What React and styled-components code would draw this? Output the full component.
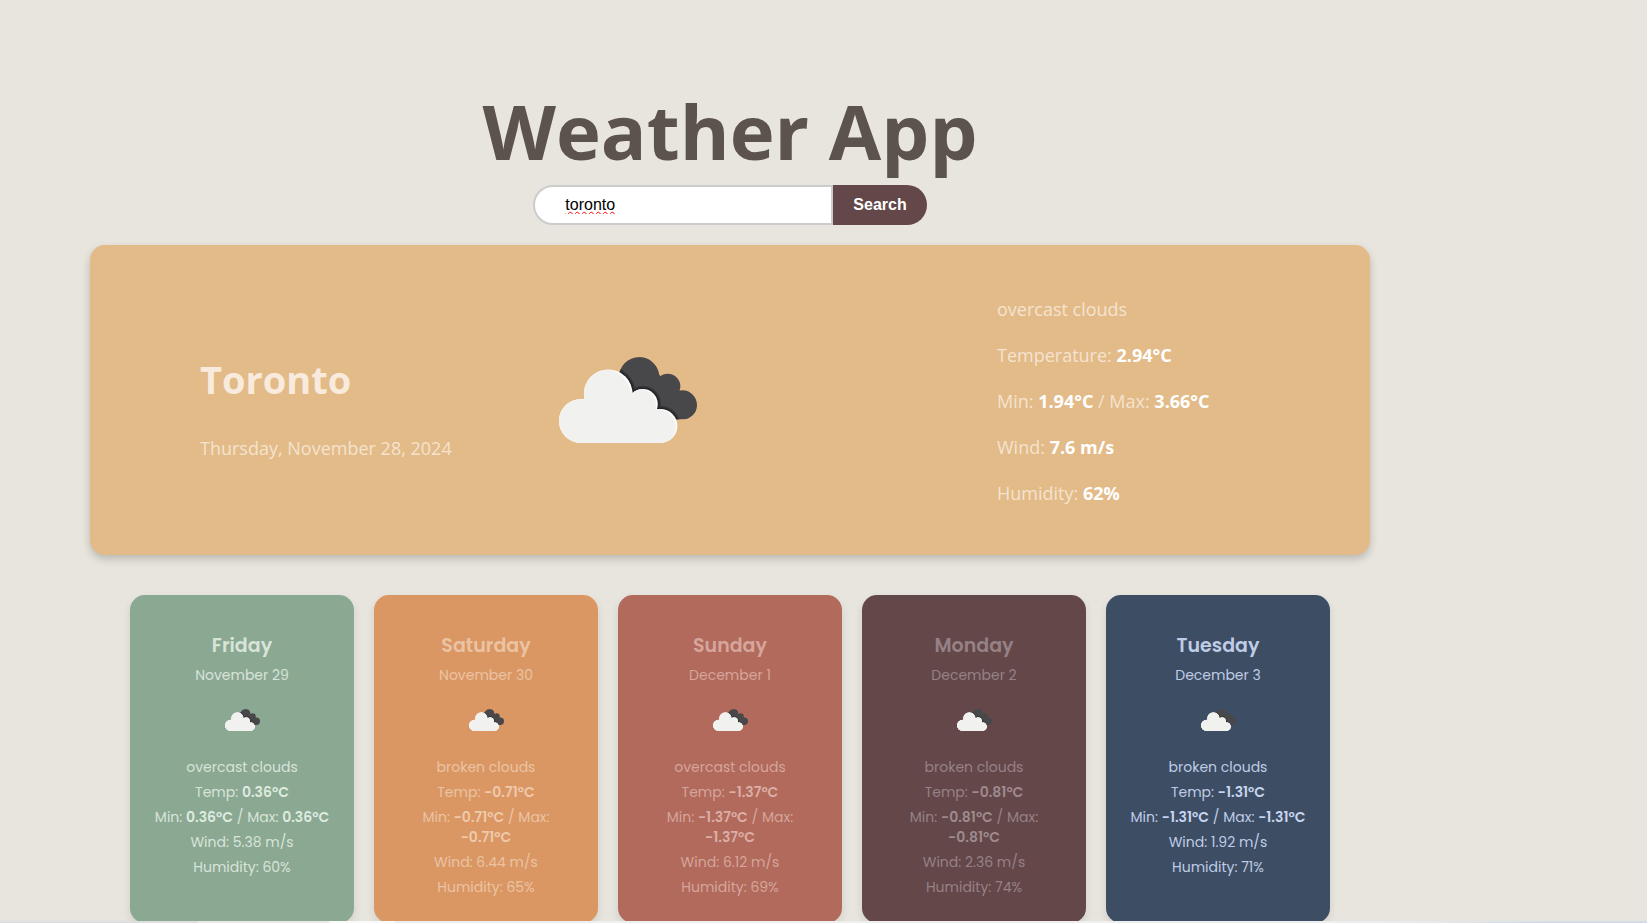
import React, { useId } from "react";
import styled, { createGlobalStyle } from "styled-components";

const GlobalStyle = createGlobalStyle`
  *, *::before, *::after { box-sizing: border-box; }
  html { background: #e8e5de; }
  body {
    margin: 0;
    overflow: hidden;
    background: #e8e5de;
    font-family: "Segoe UI", "Open Sans", "Noto Sans", sans-serif;
  }
`;

const Page = styled.main`
  min-height: 100vh;
  padding: 81px 90px 0;
`;

const Container = styled.div`
  display: flex;
  flex-direction: column;
  max-width: 1280px;
`;

const Title = styled.h1`
  margin: 0 0 4px;
  color: #5c534d;
  font-size: 76px;
  font-weight: 700;
  line-height: 100px;
  text-align: center;
`;

const SearchForm = styled.form`
  display: flex;
  justify-content: center;
  margin-bottom: 20px;
  font-family: "Liberation Sans", Arial, sans-serif;
`;

const SearchInput = styled.input`
  width: 300px;
  height: 40px;
  padding: 0 30px;
  border: 2px solid #ccc;
  border-radius: 20px 0 0 20px;
  outline: none;
  background: #fff;
  color: #000;
  font: 16px "Liberation Sans", Arial, sans-serif;
  text-decoration: underline wavy #f00 1px;
`;

const SearchButton = styled.button`
  height: 40px;
  padding: 0 20px;
  border: 0;
  border-radius: 0 20px 20px 0;
  background: #644749;
  color: #fff;
  font: bold 16px "Liberation Sans", Arial, sans-serif;
`;

const Current = styled.section`
  display: grid;
  grid-template-columns: 359fr 438fr 373fr;
  align-items: center;
  min-height: 310px;
  padding-left: 110px;
  border-radius: 15px;
  background: #e2bb89;
  box-shadow: 0 4px 8px rgba(0, 0, 0, 0.2);
  color: #f5e3cf;
  font-size: 18px;
  line-height: 26px;
`;

const Place = styled.div`
  padding-top: 16px;
`;

const City = styled.h2`
  margin: 0 0 32px;
  color: #f8ebdd;
  font-size: 38px;
  font-weight: 700;
  line-height: 48px;
`;

const Line = styled.p`
  margin: 0;
`;

const Details = styled.div`
  display: flex;
  flex-direction: column;
  gap: 20px;
  padding-top: 2px;

  strong { color: #fff; }
`;

const Forecast = styled.section`
  display: grid;
  grid-template-columns: repeat(5, 1fr);
  gap: 20px;
  padding: 40px 40px 0;
`;

const DayCard = styled.article`
  display: flex;
  flex-direction: column;
  align-items: center;
  gap: 5px;
  min-height: 328px;
  padding: 37px 20px 20px;
  border-radius: 15px;
  background: ${(p) => p.$bg};
  box-shadow: 0 4px 8px rgba(0, 0, 0, 0.1);
  color: ${(p) => p.$fg};
  font-family: Poppins, Inter, sans-serif;
  font-size: 14px;
  line-height: 20px;
  text-align: center;

  strong { color: ${(p) => p.$strong}; font-weight: 600; }
`;

const DayName = styled.h3`
  margin: 0;
  font-size: 19px;
  font-weight: 600;
  line-height: 28px;
`;

const IconSlot = styled.div`
  display: flex;
  align-items: center;
  height: 62px;
  padding-bottom: 2px;
`;

const CloudSvg = styled.svg`
  display: block;
  width: ${(p) => p.$width}px;
  height: ${(p) => p.$height}px;
`;

const BottomStrip = styled.div`
  position: fixed;
  inset: auto 0 0;
  height: 2px;
  background: linear-gradient(
    to right,
    #dedee1 0 12%,
    #eaeaeb 12% 20%,
    #fafafa 20% 24%,
    #efefef 24% 80%,
    #e6ebed 86%,
    #d5dce6 94%
  );
`;

function CloudShape(props) {
  return (
    <g {...props}>
      <circle cx="205" cy="157" r="73" />
      <circle cx="123" cy="239" r="66" />
      <circle cx="309" cy="188" r="45" />
      <circle cx="362" cy="254" r="51" />
      <path d="M123 180H310L362 210V305H123Z" />
    </g>
  );
}

function CloudIcon({ width, height, label }) {
  const id = useId();
  return (
    <CloudSvg $width={width} $height={height} viewBox="57 47 415 258" role="img" aria-label={label}>
      <clipPath id={id + "back"}>
        <circle cx="298" cy="108" r="61" />
        <circle cx="384" cy="135" r="38" />
        <circle cx="428" cy="191" r="44" />
        <path d="M245 110L350 90L400 150L428 235H370Z" />
      </clipPath>
      <clipPath id={id + "front"}>
        <circle cx="205" cy="157" r="73" />
        <circle cx="123" cy="239" r="66" />
        <circle cx="309" cy="188" r="45" />
        <circle cx="362" cy="254" r="51" />
        <path d="M123 180H310L362 210V305H123Z" />
      </clipPath>
      <g clipPath={`url(#${id}back)`}>
        <rect x="57" y="47" width="415" height="258" fill="#48484a" />
        <CloudShape fill="none" stroke="#39393b" strokeWidth="20" />
        <CloudShape fill="none" stroke="#262628" strokeWidth="11" />
      </g>
      <CloudShape fill="#fff" />
      <g clipPath={`url(#${id}front)`}>
        <CloudShape fill="#f1f1ef" transform="translate(-5 3)" />
        <CloudShape fill="#f1f1ef" transform="translate(-10 0)" />
      </g>
    </CloudSvg>
  );
}

const days = [
  { name: "Friday", date: "November 29", sky: "overcast clouds", temp: "0.36", wind: "5.38", humidity: 60, bg: "#8ba892", fg: "#d8e4da", strong: "#deebe0" },
  { name: "Saturday", date: "November 30", sky: "broken clouds", temp: "-0.71", wind: "6.44", humidity: 65, bg: "#da9763", fg: "#ebc3a3", strong: "#efc9ab", wraps: true },
  { name: "Sunday", date: "December 1", sky: "overcast clouds", temp: "-1.37", wind: "6.12", humidity: 69, bg: "#b16a5b", fg: "#d6a59c", strong: "#dcaea6", wraps: true },
  { name: "Monday", date: "December 2", sky: "broken clouds", temp: "-0.81", wind: "2.36", humidity: 74, bg: "#644749", fg: "#968285", strong: "#9e8b8e", wraps: true },
  { name: "Tuesday", date: "December 3", sky: "broken clouds", temp: "-1.31", wind: "1.92", humidity: 71, bg: "#3d4d63", fg: "#bfcce6", strong: "#c8d5f0" },
];

function Day({ day }) {
  return (
    <DayCard $bg={day.bg} $fg={day.fg} $strong={day.strong}>
      <DayName>{day.name}</DayName>
      <Line>{day.date}</Line>
      <IconSlot>
        <CloudIcon width={35} height={22} label={day.sky} />
      </IconSlot>
      <Line>{day.sky}</Line>
      <Line>Temp: <strong>{day.temp}°C</strong></Line>
      <Line>
        Min: <strong>{day.temp}°C</strong> / Max:{day.wraps ? <br /> : " "}
        <strong>{day.temp}°C</strong>
      </Line>
      <Line>Wind: {day.wind} m/s</Line>
      <Line>Humidity: {day.humidity}%</Line>
    </DayCard>
  );
}

export default function App() {
  return (
    <>
      <GlobalStyle />
      <Page>
        <Container>
          <Title>Weather App</Title>
          <SearchForm onSubmit={(e) => e.preventDefault()}>
            <SearchInput type="text" aria-label="City" defaultValue="toronto" />
            <SearchButton type="submit">Search</SearchButton>
          </SearchForm>
          <Current>
            <Place>
              <City>Toronto</City>
              <Line>Thursday, November 28, 2024</Line>
            </Place>
            <CloudIcon width={138} height={86} label="overcast clouds" />
            <Details>
              <Line>overcast clouds</Line>
              <Line>Temperature: <strong>2.94°C</strong></Line>
              <Line>Min: <strong>1.94°C</strong> / Max: <strong>3.66°C</strong></Line>
              <Line>Wind: <strong>7.6 m/s</strong></Line>
              <Line>Humidity: <strong>62%</strong></Line>
            </Details>
          </Current>
          <Forecast>
            {days.map((day) => <Day key={day.name} day={day} />)}
          </Forecast>
        </Container>
      </Page>
      <BottomStrip />
    </>
  );
}
